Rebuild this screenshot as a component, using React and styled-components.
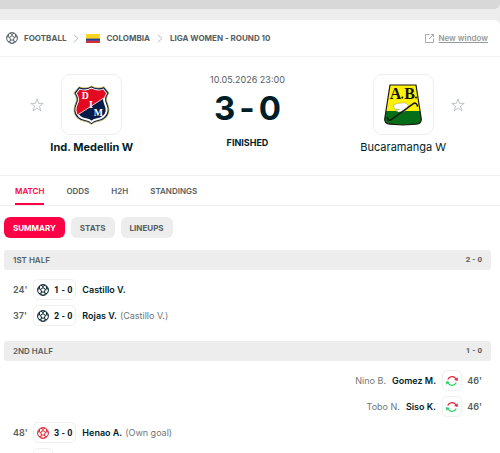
import React from "react"
import styled, { createGlobalStyle } from "styled-components"

const GlobalStyle = createGlobalStyle`
  * {
    box-sizing: border-box;
  }

  body {
    margin: 0;
    background: #ededed;
    color: #001e28;
    font-family: Inter, "Liberation Sans", Arial, sans-serif;
    font-size: 9px;
    line-height: 12px;
  }

  button {
    font: inherit;
    border: none;
    background: none;
    padding: 0;
    cursor: pointer;
  }

  svg {
    display: block;
    flex: none;
  }
`

const Page = styled.div`
  display: flex;
  flex-direction: column;
  height: 100vh;
  overflow: hidden;
`

const AdBar = styled.div`
  flex: none;
  height: 9px;
  margin-bottom: 11px;
  background: #d8d8d8;
  border-bottom-right-radius: 6px;
`

const Panel = styled.main`
  flex: 1;
  min-height: 0;
  background: #fff;
  border-top-right-radius: 6px;
`

const TopLine = styled.header`
  display: flex;
  align-items: center;
  justify-content: space-between;
  height: 37px;
  padding: 0 12px 0 6px;
  border-bottom: 1px solid #f3f3f3;
`

const Breadcrumbs = styled.nav`
  display: flex;
  align-items: center;
  gap: 7px;
  font-size: 8px;
  font-weight: 700;
  color: #555e61;
`

const Crumb = styled.a`
  display: flex;
  align-items: center;
  gap: 6px;
  color: inherit;
  text-decoration: none;
`

const NewWindow = styled.a`
  display: flex;
  align-items: center;
  gap: 4px;
  font-size: 8px;
  font-weight: 600;
  color: #999;
  text-decoration: none;

  span {
    text-decoration: underline;
  }
`

const Duel = styled.section`
  display: grid;
  grid-template-columns: 1fr 1fr 1fr;
  padding: 17px 19px 21px 14px;
  border-bottom: 1px solid #f0f0f0;
`

const Team = styled.div`
  display: flex;
  flex-direction: column;
  gap: 5px;
  text-align: center;
`

const CrestRow = styled.div`
  display: grid;
  grid-template-columns: 1fr auto 1fr;
  align-items: center;
  column-gap: 17px;
`

const StarButton = styled.button`
  grid-column: ${({ $side }) => ($side === "home" ? 1 : 3)};
  grid-row: 1;
  justify-self: ${({ $side }) => ($side === "home" ? "end" : "start")};
`

const Crest = styled.div`
  grid-column: 2;
  grid-row: 1;
  display: grid;
  place-items: center;
  width: 61px;
  height: 61px;
  border: 1px solid #eee;
  border-radius: 9px;
`

const TeamName = styled.a`
  font-size: 11px;
  line-height: 14px;
  font-weight: ${({ $winner }) => ($winner ? 700 : 400)};
  color: #001e28;
  text-decoration: none;
  white-space: nowrap;
`

const ScoreBox = styled.div`
  display: flex;
  flex-direction: column;
  align-items: center;
`

const StartTime = styled.div`
  color: #555e61;
`

const Score = styled.div`
  display: flex;
  gap: 4px;
  margin: 5px 0 12px;
  font-size: 33px;
  line-height: 34px;
  font-weight: 700;
`

const Status = styled.div`
  font-weight: 700;
`

const Tabs = styled.nav`
  display: flex;
  gap: 22px;
  height: 30px;
  padding: 0 15px;
  border-bottom: 1px solid #f0f0f0;
`

const Tab = styled.button`
  font-size: 8px;
  font-weight: 600;
  color: ${({ $active }) => ($active ? "#ff0046" : "#555e61")};
  border-top: 2px solid transparent;
  border-bottom: 2px solid ${({ $active }) => ($active ? "#ff0046" : "transparent")};
`

const Content = styled.div`
  padding: 11px 9px 0 4px;
`

const Pills = styled.div`
  display: flex;
  gap: 6px;
  margin-bottom: 12px;
`

const Pill = styled.button`
  height: 21px;
  padding: 0 9px;
  border-radius: 6px;
  font-size: 8px;
  font-weight: 700;
  background: ${({ $active }) => ($active ? "#ff0046" : "#ededed")};
  color: ${({ $active }) => ($active ? "#fff" : "#555e61")};
`

const StageHeader = styled.h2`
  display: flex;
  justify-content: space-between;
  align-items: center;
  height: 20px;
  margin: 0;
  padding: 0 9px;
  border-radius: 3px;
  background: #ededed;
  font-size: 8px;
  font-weight: 600;
  color: #555e61;
`

const StageScore = styled.span`
  font-family: Roboto, Inter, sans-serif;
  font-weight: 700;
`

const Incidents = styled.ul`
  display: flex;
  flex-direction: column;
  gap: 5px;
  margin: 0;
  padding: 9px 9px 15px;
  list-style: none;
`

const Incident = styled.li`
  display: flex;
  flex-direction: ${({ $away }) => ($away ? "row-reverse" : "row")};
  align-items: center;
  height: 21px;
`

const Minute = styled.div`
  width: 20px;
  font-weight: 600;
  color: #555e61;
  text-align: ${({ $away }) => ($away ? "right" : "left")};
`

const Badge = styled.div`
  display: flex;
  align-items: center;
  justify-content: center;
  gap: 5px;
  min-width: 20px;
  height: 21px;
  padding: 0 3px;
  border: 1px solid #f0f0f0;
  border-radius: 5px;
  font-family: Roboto, Inter, sans-serif;
  font-weight: 700;
  white-space: nowrap;
`

const Players = styled.div`
  display: flex;
  flex-direction: ${({ $away }) => ($away ? "row-reverse" : "row")};
  gap: ${({ $away }) => ($away ? 6 : 3)}px;
  padding: 0 6px;
`

const Player = styled.a`
  font-weight: 600;
  color: #001e28;
  text-decoration: none;
`

const SubText = styled.span`
  color: #6f777a;
`

const BallIcon = ({ size = 12, color = "#001e28" }) => (
  <svg width={size} height={size} viewBox="0 0 24 24" fill="none" stroke={color} strokeWidth="2">
    <circle cx="12" cy="12" r="10.8" />
    <path d="M12 7.2l4.7 3.4-1.8 5.5H9.1l-1.8-5.5z" />
    <path d="M12 7.2V4.5M16.7 10.6l3-1M14.9 16.1l1.8 2.6M9.1 16.1l-1.8 2.6M7.3 10.6l-3-1" />
    <path d="M7.8 2.2L12 4.8l4.2-2.6M22.4 10l-3-.6L18.6 4M19.8 19.3l-3.3-.8-3.2 4M4.2 19.3l3.3-.8 3.2 4M1.6 10l3-.6L5.4 4" />
  </svg>
)

const ChevronIcon = () => (
  <svg width="6" height="9" viewBox="0 0 6 9" fill="none" stroke="#bbb">
    <path d="M1 .8l4 3.7-4 3.7" />
  </svg>
)

const FlagIcon = () => (
  <svg width="14" height="9" viewBox="0 0 14 9">
    <path fill="#fcd422" d="M0 0h14v5H0z" />
    <path fill="#263f91" d="M0 4.6h14v2.3H0z" />
    <path fill="#d92d3c" d="M0 6.8h14V9H0z" />
  </svg>
)

const WindowIcon = () => (
  <svg width="9" height="9" viewBox="0 0 9 9" fill="none" stroke="#aaa">
    <path d="M4.5.5h-4v8h8v-4M5.8.5h2.7v2.7M8.5.5L4 5" />
  </svg>
)

const StarIcon = () => (
  <svg width="14" height="14" viewBox="0 0 20 20" fill="none" stroke="#b4b9bb" strokeWidth="1.2">
    <path d="M10 1.2l2.2 6.5h6.7l-5.4 4 2 6.7-5.5-4.1-5.5 4.1 2-6.7-5.4-4h6.7z" />
  </svg>
)

const SwapIcon = () => (
  <svg width="12" height="12" viewBox="0 0 24 24" fill="none" strokeWidth="2.4">
    <path stroke="#e32636" d="M3.5 9A9.3 9.3 0 0 1 19.8 7.5" />
    <path fill="#e32636" d="M23.5 4.5v7.3l-7.2-2z" />
    <path stroke="#22cf5c" d="M20.5 15A9.3 9.3 0 0 1 4.2 16.5" />
    <path fill="#22cf5c" d="M.5 19.5v-7.3l7.2 2z" />
  </svg>
)

const MedellinCrest = () => (
  <svg width="39" height="42" viewBox="0 0 40 42">
    <defs>
      <clipPath id="shield">
        <path d="M8 5.2Q14 7.5 20 4.2Q26 7.5 32 5.2L35 9.2Q31.2 14 34 20Q37.8 28 32.3 32.8Q29.5 35.3 25.7 35.6Q22 36.2 20 38.3Q18 36.2 14.3 35.6Q10.5 35.3 7.7 32.8Q2.2 28 6 20Q8.8 14 5 9.2z" />
      </clipPath>
    </defs>
    <path
      d="M7.2 2.2Q14 5 20 1.5Q26 5 32.8 2.2L38 8.6Q33.8 14 36.5 19.5Q40.5 28.8 34.2 34.6Q31 37.5 26.7 37.8Q22.4 38.4 20 41Q17.6 38.4 13.3 37.8Q9 37.5 5.8 34.6Q-.5 28.8 3.5 19.5Q6.2 14 2 8.6z"
      fill="#081d4b"
      stroke="#d7bd55"
      strokeWidth=".8"
    />
    <path
      d="M8 5.2Q14 7.5 20 4.2Q26 7.5 32 5.2L35 9.2Q31.2 14 34 20Q37.8 28 32.3 32.8Q29.5 35.3 25.7 35.6Q22 36.2 20 38.3Q18 36.2 14.3 35.6Q10.5 35.3 7.7 32.8Q2.2 28 6 20Q8.8 14 5 9.2z"
      fill="#071b49"
      stroke="#fff"
      strokeWidth="2"
    />
    <path clipPath="url(#shield)" fill="#e30920" d="M0 0h40v9L4 32.5H0z" />
    <path clipPath="url(#shield)" stroke="#fff" strokeWidth=".8" d="M40 9L3 33" />
    <g fill="#fff" fontFamily="Liberation Serif, serif" fontWeight="700" fontSize="10" textAnchor="middle">
      <text x="13.5" y="15">D</text>
      <text x="19.5" y="24">I</text>
      <text x="27" y="32.5">M</text>
    </g>
  </svg>
)

const BucaramangaCrest = () => (
  <svg width="38" height="42" viewBox="0 0 38 42">
    <defs>
      <clipPath id="field">
        <path d="M6 1h26l5.3 34Q37.5 40 32 40.2L19 41 6 40.2Q.5 40 .7 35z" />
      </clipPath>
    </defs>
    <g clipPath="url(#field)">
      <path fill="#ffef0a" d="M0 0h38v27H0z" />
      <path fill="#066d18" d="M0 27h38v15H0z" />
    </g>
    <path d="M6 1h26l5.3 34Q37.5 40 32 40.2L19 41 6 40.2Q.5 40 .7 35z" fill="none" stroke="#171a12" strokeWidth="1.2" />
    <path fill="#fff" stroke="#78806b" strokeWidth=".4" d="M9.5 21l4-1.6 7-.6 4 2.2-1 3-3 3.4-6 .6-3-1.3 4-1.2-5-.6z" />
    <path d="M3.5 33.5Q4 37.5 7 35.8L29 19.8Q32.5 17.8 33.5 22" fill="none" stroke="#171a12" strokeWidth="1.6" strokeLinecap="round" />
    <g fill="#10120c" fontFamily="Liberation Serif, serif" fontWeight="700" fontSize="16" textAnchor="middle">
      <text x="11.5" y="14.5">A</text>
      <text x="25.5" y="14.5">B</text>
    </g>
    <circle cx="18.4" cy="13.6" r="1" fill="#10120c" />
    <circle cx="32" cy="13.6" r="1" fill="#10120c" />
  </svg>
)

const tabs = ["MATCH", "ODDS", "H2H", "STANDINGS"]
const pills = ["SUMMARY", "STATS", "LINEUPS"]

const stages = [
  {
    name: "1ST HALF",
    score: "2 - 0",
    incidents: [
      { minute: "24'", type: "goal", score: "1 - 0", player: "Castillo V." },
      { minute: "37'", type: "goal", score: "2 - 0", player: "Rojas V.", sub: "(Castillo V.)" },
    ],
  },
  {
    name: "2ND HALF",
    score: "1 - 0",
    incidents: [
      { minute: "46'", type: "swap", player: "Gomez M.", sub: "Nino B.", away: true },
      { minute: "46'", type: "swap", player: "Siso K.", sub: "Tobo N.", away: true },
      { minute: "48'", type: "own", score: "3 - 0", player: "Henao A.", sub: "(Own goal)" },
      { type: "card" },
    ],
  },
]

const IncidentRow = ({ minute, type, score, player, sub, away }) => (
  <Incident $away={away}>
    <Minute $away={away}>{minute}</Minute>
    <Badge>
      {type === "goal" && <BallIcon />}
      {type === "own" && <BallIcon color="#dc1f2c" />}
      {type === "swap" && <SwapIcon />}
      {score}
    </Badge>
    {player && (
      <Players $away={away}>
        <Player href="#">{player}</Player>
        {sub && <SubText>{sub}</SubText>}
      </Players>
    )}
  </Incident>
)

const App = () => (
  <>
    <GlobalStyle />
    <Page>
      <AdBar />
      <Panel>
        <TopLine>
          <Breadcrumbs>
            <Crumb href="#">
              <BallIcon color="#555e61" />
              FOOTBALL
            </Crumb>
            <ChevronIcon />
            <Crumb href="#">
              <FlagIcon />
              COLOMBIA
            </Crumb>
            <ChevronIcon />
            <Crumb href="#">LIGA WOMEN - ROUND 10</Crumb>
          </Breadcrumbs>
          <NewWindow href="#">
            <WindowIcon />
            <span>New window</span>
          </NewWindow>
        </TopLine>
        <Duel>
          <Team>
            <CrestRow>
              <StarButton $side="home" aria-label="Add Ind. Medellin W to favourites">
                <StarIcon />
              </StarButton>
              <Crest>
                <MedellinCrest />
              </Crest>
            </CrestRow>
            <TeamName href="#" $winner>Ind. Medellin W</TeamName>
          </Team>
          <ScoreBox>
            <StartTime>10.05.2026 23:00</StartTime>
            <Score>
              <span>3</span>
              <span>-</span>
              <span>0</span>
            </Score>
            <Status>FINISHED</Status>
          </ScoreBox>
          <Team>
            <CrestRow>
              <StarButton $side="away" aria-label="Add Bucaramanga W to favourites">
                <StarIcon />
              </StarButton>
              <Crest>
                <BucaramangaCrest />
              </Crest>
            </CrestRow>
            <TeamName href="#">Bucaramanga W</TeamName>
          </Team>
        </Duel>
        <Tabs>
          {tabs.map((tab, i) => (
            <Tab key={tab} $active={i === 0}>{tab}</Tab>
          ))}
        </Tabs>
        <Content>
          <Pills>
            {pills.map((pill, i) => (
              <Pill key={pill} $active={i === 0}>{pill}</Pill>
            ))}
          </Pills>
          {stages.map(stage => (
            <section key={stage.name}>
              <StageHeader>
                <span>{stage.name}</span>
                <StageScore>{stage.score}</StageScore>
              </StageHeader>
              <Incidents>
                {stage.incidents.map((incident, i) => (
                  <IncidentRow key={i} {...incident} />
                ))}
              </Incidents>
            </section>
          ))}
        </Content>
      </Panel>
    </Page>
  </>
)

export default App
